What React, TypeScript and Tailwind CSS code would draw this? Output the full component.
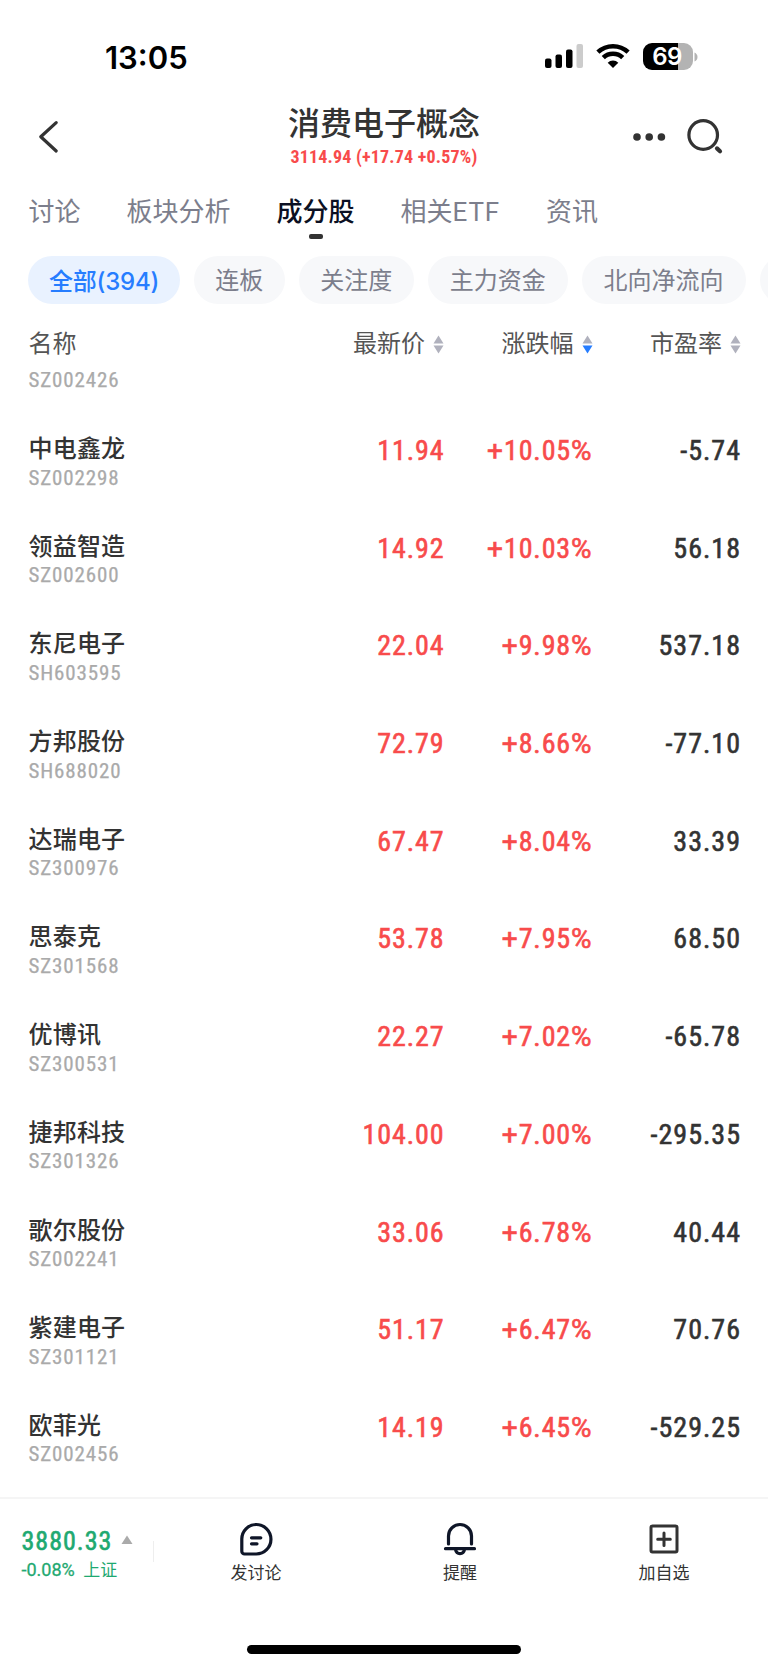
import React from "react";

const stocks = [
  ["中电鑫龙", "SZ002298", "11.94", "10.05", "-5.74"],
  ["领益智造", "SZ002600", "14.92", "10.03", "56.18"],
  ["东尼电子", "SH603595", "22.04", "9.98", "537.18"],
  ["方邦股份", "SH688020", "72.79", "8.66", "-77.10"],
  ["达瑞电子", "SZ300976", "67.47", "8.04", "33.39"],
  ["思泰克", "SZ301568", "53.78", "7.95", "68.50"],
  ["优博讯", "SZ300531", "22.27", "7.02", "-65.78"],
  ["捷邦科技", "SZ301326", "104.00", "7.00", "-295.35"],
  ["歌尔股份", "SZ002241", "33.06", "6.78", "40.44"],
  ["紫建电子", "SZ301121", "51.17", "6.47", "70.76"],
  ["欧菲光", "SZ002456", "14.19", "6.45", "-529.25"],
];

const tabs = ["讨论", "板块分析", "成分股", "相关ETF", "资讯"];

const pills = [
  { label: "全部(394)", width: "w-[152px]" },
  { label: "连板", width: "w-[90.5px]" },
  { label: "关注度", width: "w-[115.5px]" },
  { label: "主力资金", width: "w-[139.5px]" },
  { label: "北向净流向", width: "w-[164px]" },
  { label: "", width: "w-[115px]" },
];

function SortArrows({ active = false }: { active?: boolean }) {
  return (
    <svg width="11" height="19" viewBox="0 0 11 19" className="ml-2 shrink-0">
      <path d="M5.5 0.5L10.5 8.6H0.5Z" fill="#b0b1bd" />
      <path d="M5.5 18.5L10.5 10.4H0.5Z" fill={active ? "#267dff" : "#b0b1bd"} />
    </svg>
  );
}

function StatusBar() {
  return (
    <div className="flex h-[92px] items-start pl-[105px] pt-[37px]">
      <div className="w-[440px] pt-px text-[31px] font-semibold leading-[40px] text-black [font-family:Inter,sans-serif]">13:05</div>
      <svg width="39" height="26" viewBox="0 0 39 26" className="mt-[6px]">
        <rect x="0" y="15.5" width="6.5" height="9.5" rx="2" />
        <rect x="10.5" y="11.5" width="6.5" height="13.5" rx="2" />
        <rect x="21" y="6.5" width="6.5" height="18.5" rx="2" />
        <rect x="31.5" y="1" width="6.5" height="24" rx="2" fill="#ccc" />
      </svg>
      <svg width="34" height="26" viewBox="0 0 34 26" className="ml-[12px] mt-[6px]" fill="none" stroke="#000" strokeWidth="4.6">
        <path d="M1.9 9.2A22 22 0 0 1 32.1 9.2" />
        <path d="M7.3 14.6A14.2 14.2 0 0 1 26.7 14.6" />
        <path d="M17 25L11.7 19.7A7.6 7.6 0 0 1 22.3 19.7Z" fill="#000" stroke="none" />
      </svg>
      <div className="ml-[12.5px] mt-[6px] flex items-center">
        <div className="flex h-[27px] w-[50px] items-center justify-center rounded-[9px] bg-[linear-gradient(90deg,#000_69%,#b3b3b3_69%)] pr-px text-[24px] font-semibold leading-none tracking-[-0.5px] text-white [font-family:Inter,sans-serif]">
          69
        </div>
        <svg width="4" height="10" viewBox="0 0 4 10" className="ml-px">
          <path d="M0.5 0.5Q3.5 2 3.5 5Q3.5 8 0.5 9.5Z" fill="#b3b3b3" />
        </svg>
      </div>
    </div>
  );
}

function Header() {
  return (
    <header className="flex h-[88px] justify-between">
      <svg width="24" height="36" viewBox="0 0 24 36" className="ml-[37px] mt-[27px]" fill="none" stroke="#333" strokeWidth="3.2" strokeLinecap="round" strokeLinejoin="round">
        <path d="M19.2 3.6L3.8 17.8L19.2 32" />
      </svg>
      <div className="ml-[74px] flex w-[260px] flex-col items-center pt-[9px]">
        <h1 className="whitespace-nowrap text-[32px] font-medium leading-[46px] text-[#333]">消费电子概念</h1>
        <div className="-mt-px whitespace-nowrap text-[18px] font-bold leading-[22px] tracking-[0.2px] text-[#f84b4b] [font-stretch:87%]">3114.94 (+17.74 +0.57%)</div>
      </div>
      <svg width="92" height="40" viewBox="0 0 92 40" className="mr-[43px] mt-[25px]" fill="#333">
        <circle cx="4" cy="20" r="3.8" />
        <circle cx="16.2" cy="20" r="3.8" />
        <circle cx="28.4" cy="20" r="3.8" />
        <circle cx="70.2" cy="18" r="14.3" fill="none" stroke="#333" strokeWidth="3.2" />
        <path d="M84 31.4L87 34.2" fill="none" stroke="#333" strokeWidth="4.2" strokeLinecap="round" />
      </svg>
    </header>
  );
}

function BottomItem({ label, className, children }: { label: string; className: string; children: React.ReactNode }) {
  return (
    <div className={`flex flex-col items-center pt-[22px] ${className}`}>
      {children}
      <span className="mt-[4px] text-[17px] leading-[24px] text-[#333]">{label}</span>
    </div>
  );
}

export default function App() {
  return (
    <div className="flex h-[1669px] w-[768px] flex-col overflow-hidden bg-white [font-family:Roboto,'Noto_Sans_CJK_SC',sans-serif]">
      <StatusBar />
      <Header />
      <nav className="flex h-[76px] gap-[46px] pl-[28.5px] pt-[12px] text-[26px] leading-[40px] text-[#7c7e8c]">
        {tabs.map((tab) =>
          tab === "成分股" ? (
            <div key={tab} className="flex flex-col items-center font-medium text-[#0b1023]">
              {tab}
              <span className="mt-[1.5px] h-[5px] w-[14px] rounded-[2px] bg-[#333]" />
            </div>
          ) : tab === "相关ETF" ? (
            <div key={tab} className="whitespace-nowrap">
              相关<span className="tracking-[0.8px]">ETF</span>
            </div>
          ) : (
            <div key={tab} className="whitespace-nowrap">{tab}</div>
          ),
        )}
      </nav>
      <div className="flex h-[48px] gap-[14px] pl-[28px] text-[24px] leading-[51px]">
        {pills.map((p, i) => (
          <div
            key={i}
            className={`${p.width} h-[48px] shrink-0 whitespace-nowrap rounded-full text-center ${i === 0 ? "bg-[#e9f2ff] font-medium tracking-[-0.2px] text-[#267dff] [font-family:Inter,'Noto_Sans_CJK_SC',sans-serif]" : "bg-[#f7f8fa] text-[#7c7e8c]"}`}
          >
            {p.label}
          </div>
        ))}
      </div>
      <div className="flex h-[60px] shrink-0 items-center pl-[28.5px] pr-[27px] pt-[20px] text-[24px] leading-[36px] text-[#555]">
        <span className="flex-1">名称</span>
        <span className="flex w-[148px] items-center justify-end">最新价<SortArrows /></span>
        <span className="flex w-[148.5px] items-center justify-end">涨跌幅<SortArrows active /></span>
        <span className="flex w-[148.5px] items-center justify-end">市盈率<SortArrows /></span>
      </div>
      <main className="flex-1 overflow-hidden">
        <div className="h-[62px] pl-[28.5px] pt-[2.5px] text-[21px] leading-[26px] tracking-[0.85px] text-[#aaa] [-webkit-text-stroke:0.25px_#aaa] [font-stretch:87%]">SZ002426</div>
        {stocks.map(([name, code, price, change, pe]) => (
          <div key={code} className="flex h-[97.7px] pl-[28.5px] pr-[27px] text-[28px] leading-[36px] [font-stretch:87%]">
            <div className="flex-1 pt-[5px]">
              <div className="text-[24px] font-medium tracking-[0.2px] text-[#333]">{name}</div>
              <div className="-mt-[2.5px] text-[21px] leading-[26px] tracking-[0.85px] text-[#aaa] [-webkit-text-stroke:0.25px_#aaa]">{code}</div>
            </div>
            <div className="w-[120px] pt-[7px] text-right tracking-[0.9px] text-[#f84b4b] [-webkit-text-stroke:0.6px_#f84b4b]">{price}</div>
            <div className="w-[148px] pt-[7px] text-right tracking-[0.9px] text-[#f84b4b] [-webkit-text-stroke:0.6px_#f84b4b]">
              <span className="[font-stretch:100%]">+</span>{change}<span className="[font-stretch:100%]">%</span>
            </div>
            <div className="w-[148.5px] pt-[7px] text-right tracking-[1px] text-[#333] [-webkit-text-stroke:0.6px_#333]">{pe}</div>
          </div>
        ))}
      </main>
      <footer className="flex h-[172px] shrink-0 flex-col border-t-2 border-[#f5f5f5]">
        <div className="flex h-[146px] items-start">
          <div className="w-[153px] pl-[21.5px] pt-[26px] text-[#1fa971]">
            <div className="flex items-center text-[26px] leading-[32px] tracking-[1px] [-webkit-text-stroke:0.6px_#1fa971] [font-stretch:87%]">
              3880.33
              <svg width="12" height="10" viewBox="0 0 12 10" className="-mt-[3px] ml-[8.5px]"><path d="M6 .5L11.5 9H.5Z" fill="#aaa" /></svg>
            </div>
            <div className="whitespace-nowrap text-[18px] leading-[26px]"><span className="[-webkit-text-stroke:0.3px_#1fa971]">-0.08%</span> <span className="ml-1 text-[17px]">上证</span></div>
          </div>
          <div className="mt-[42px] h-[21px] w-px bg-[#eee]" />
          <BottomItem label="发讨论" className="ml-[51px] w-[102px]">
            <svg width="34" height="36" viewBox="0 0 34 36" fill="none" stroke="#0f1628" strokeWidth="3.2" strokeLinecap="round" strokeLinejoin="round">
              <path d="M17.200 3.500A14.300 14.300 0 0 1 17.200 33H5.600A2.800 2.800 0 0 1 2.800 30.200V18A14.400 14.400 0 0 1 17.200 3.500Z" />
              <path d="M12.500 16.800H21.800M12.500 22.800H18" />
            </svg>
          </BottomItem>
          <BottomItem label="提醒" className="ml-[102px] w-[102px]">
            <svg width="34" height="36" viewBox="0 0 34 36" fill="none" stroke="#0f1628" strokeWidth="3.2" strokeLinecap="round">
              <path d="M5.500 23V15A11.500 11.500 0 0 1 28.500 15V23M2.500 27.700H31.500M12.500 28.500C13.500 34 20.500 34 21.500 28.500" />
            </svg>
          </BottomItem>
          <BottomItem label="加自选" className="ml-[102px] w-[102px]">
            <svg width="34" height="36" viewBox="0 0 34 36" fill="none" stroke="#333" strokeWidth="3" strokeLinecap="round">
              <rect x="4" y="5" width="26" height="26" rx="1.500" />
              <path d="M17 12V24.500M10.700 18.200H23.300" />
            </svg>
          </BottomItem>
        </div>
        <div className="ml-[247px] h-[9px] w-[274px] rounded-full bg-black" />
      </footer>
    </div>
  );
}
